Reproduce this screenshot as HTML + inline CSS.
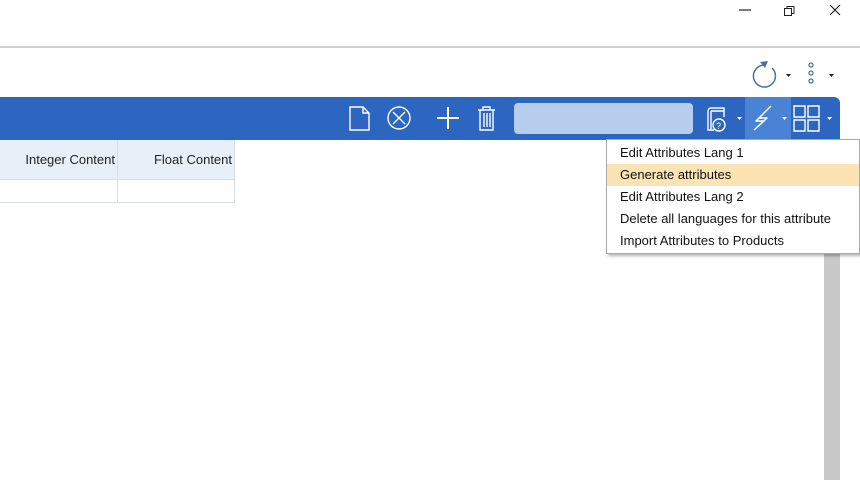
<!DOCTYPE html><html><head><style>
body{margin:0;width:860px;height:480px;background:#fff;position:relative;overflow:hidden;font-family:"Liberation Sans",sans-serif;}
.a{position:absolute}
.menu div{height:22px;line-height:22px;padding-left:13px;font-size:13px;color:#111}
</style></head><body>
<div class="a" style="left:0;top:46px;width:860px;height:2px;background:#d0d0d0"></div>
<svg class="a" style="left:730px;top:0" width="130" height="25">
<line x1="9" y1="10" x2="21" y2="10" stroke="#222" stroke-width="1.2"/>
<rect x="54.5" y="8.5" width="7" height="7" fill="none" stroke="#222"/><path d="M57 8.5V6.5h7v7h-2" fill="none" stroke="#222"/>
<path d="M100 5l10 10M110 5l-10 10" stroke="#222" stroke-width="1.2"/>
</svg>
<svg class="a" style="left:750px;top:58px" width="90" height="32">
<path d="M14 7a11 11 0 1 0 8 3" fill="none" stroke="#4a6fa5" stroke-width="1.5"/>
<path d="M10 4l8 -1l-3 7z" fill="#4a6fa5"/>
<path d="M36 16h5l-2.5 3z" fill="#222"/>
<circle cx="61" cy="7" r="2" fill="none" stroke="#4a6fa5" stroke-width="1.3"/>
<circle cx="61" cy="15" r="2" fill="none" stroke="#4a6fa5" stroke-width="1.3"/>
<circle cx="61" cy="23" r="2" fill="none" stroke="#4a6fa5" stroke-width="1.3"/>
<path d="M79 16h5l-2.5 3z" fill="#222"/>
</svg>
<div class="a" style="left:0;top:97px;width:840px;height:43px;background:#2c66c0;border-radius:0 6px 0 0"></div>
<div class="a" style="left:514px;top:103px;width:179px;height:31px;background:#b6cdee;border-radius:4px"></div>
<div class="a" style="left:745px;top:97px;width:46px;height:43px;background:#4a82d6"></div>
<svg class="a" style="left:340px;top:97px" width="500" height="43" fill="none" stroke="#fff" stroke-width="1.4">
<path d="M10 10h13l6 6v17h-19z M23 10v6h6"/>
<circle cx="59" cy="21" r="11"/><path d="M53 15l12 12M65 15l-12 12"/>
<path d="M108 10v22M97 21h22" stroke-width="2"/>
<path d="M138 13h17M143 13v-3h7v3M140 13v20h13v-20M144 16v14M147 16v14M150 16v14"/>
<path d="M368 14a3 3 0 0 1 3-3h13v9 M368 14v19h6 M371 14h13 M371 14v19"/><circle cx="379" cy="28" r="6"/>
<text x="376" y="32" font-size="9" fill="#fff" stroke="none" font-family="Liberation Sans">?</text>
<path d="M397 20h5l-2.5 3z M442 20h5l-2.5 3z M487 20h5l-2.5 3z" fill="#fff" stroke="none"/>
<path d="M431 9l-15 15h8l-10 9 M431 9l-12 12h8l-13 12" stroke-linejoin="round"/>
<path d="M454 9h11v11h-11z M468 9h11v11h-11z M454 23h11v11h-11z M468 23h11v11h-11z"/>
</svg>
<div class="a" style="left:0;top:140px;width:234px;height:39px;background:#e9eff9;border-bottom:1px solid #d8dde5"></div>
<div class="a" style="left:117px;top:140px;width:1px;height:62px;background:#d8dde5"></div>
<div class="a" style="left:234px;top:140px;width:1px;height:62px;background:#d8dde5"></div>
<div class="a" style="left:0;top:202px;width:235px;height:1px;background:#d8dde5"></div>
<div class="a" style="left:0;top:152px;width:115px;text-align:right;font-size:13px;color:#222">Integer Content</div>
<div class="a" style="left:118px;top:152px;width:114px;text-align:right;font-size:13px;color:#222">Float Content</div>
<div class="a" style="left:824px;top:254px;width:16px;height:226px;background:#c8c8c8"></div>
<div class="a menu" style="left:606px;top:139px;width:254px;height:115px;background:#fff;border:1px solid #aaa;box-shadow:2px 2px 3px rgba(0,0,0,.3);padding-top:2px;box-sizing:border-box">
<div>Edit Attributes Lang 1</div>
<div style="background:#fce3b4">Generate attributes</div>
<div>Edit Attributes Lang 2</div>
<div>Delete all languages for this attribute</div>
<div>Import Attributes to Products</div>
</div>
</body></html>
